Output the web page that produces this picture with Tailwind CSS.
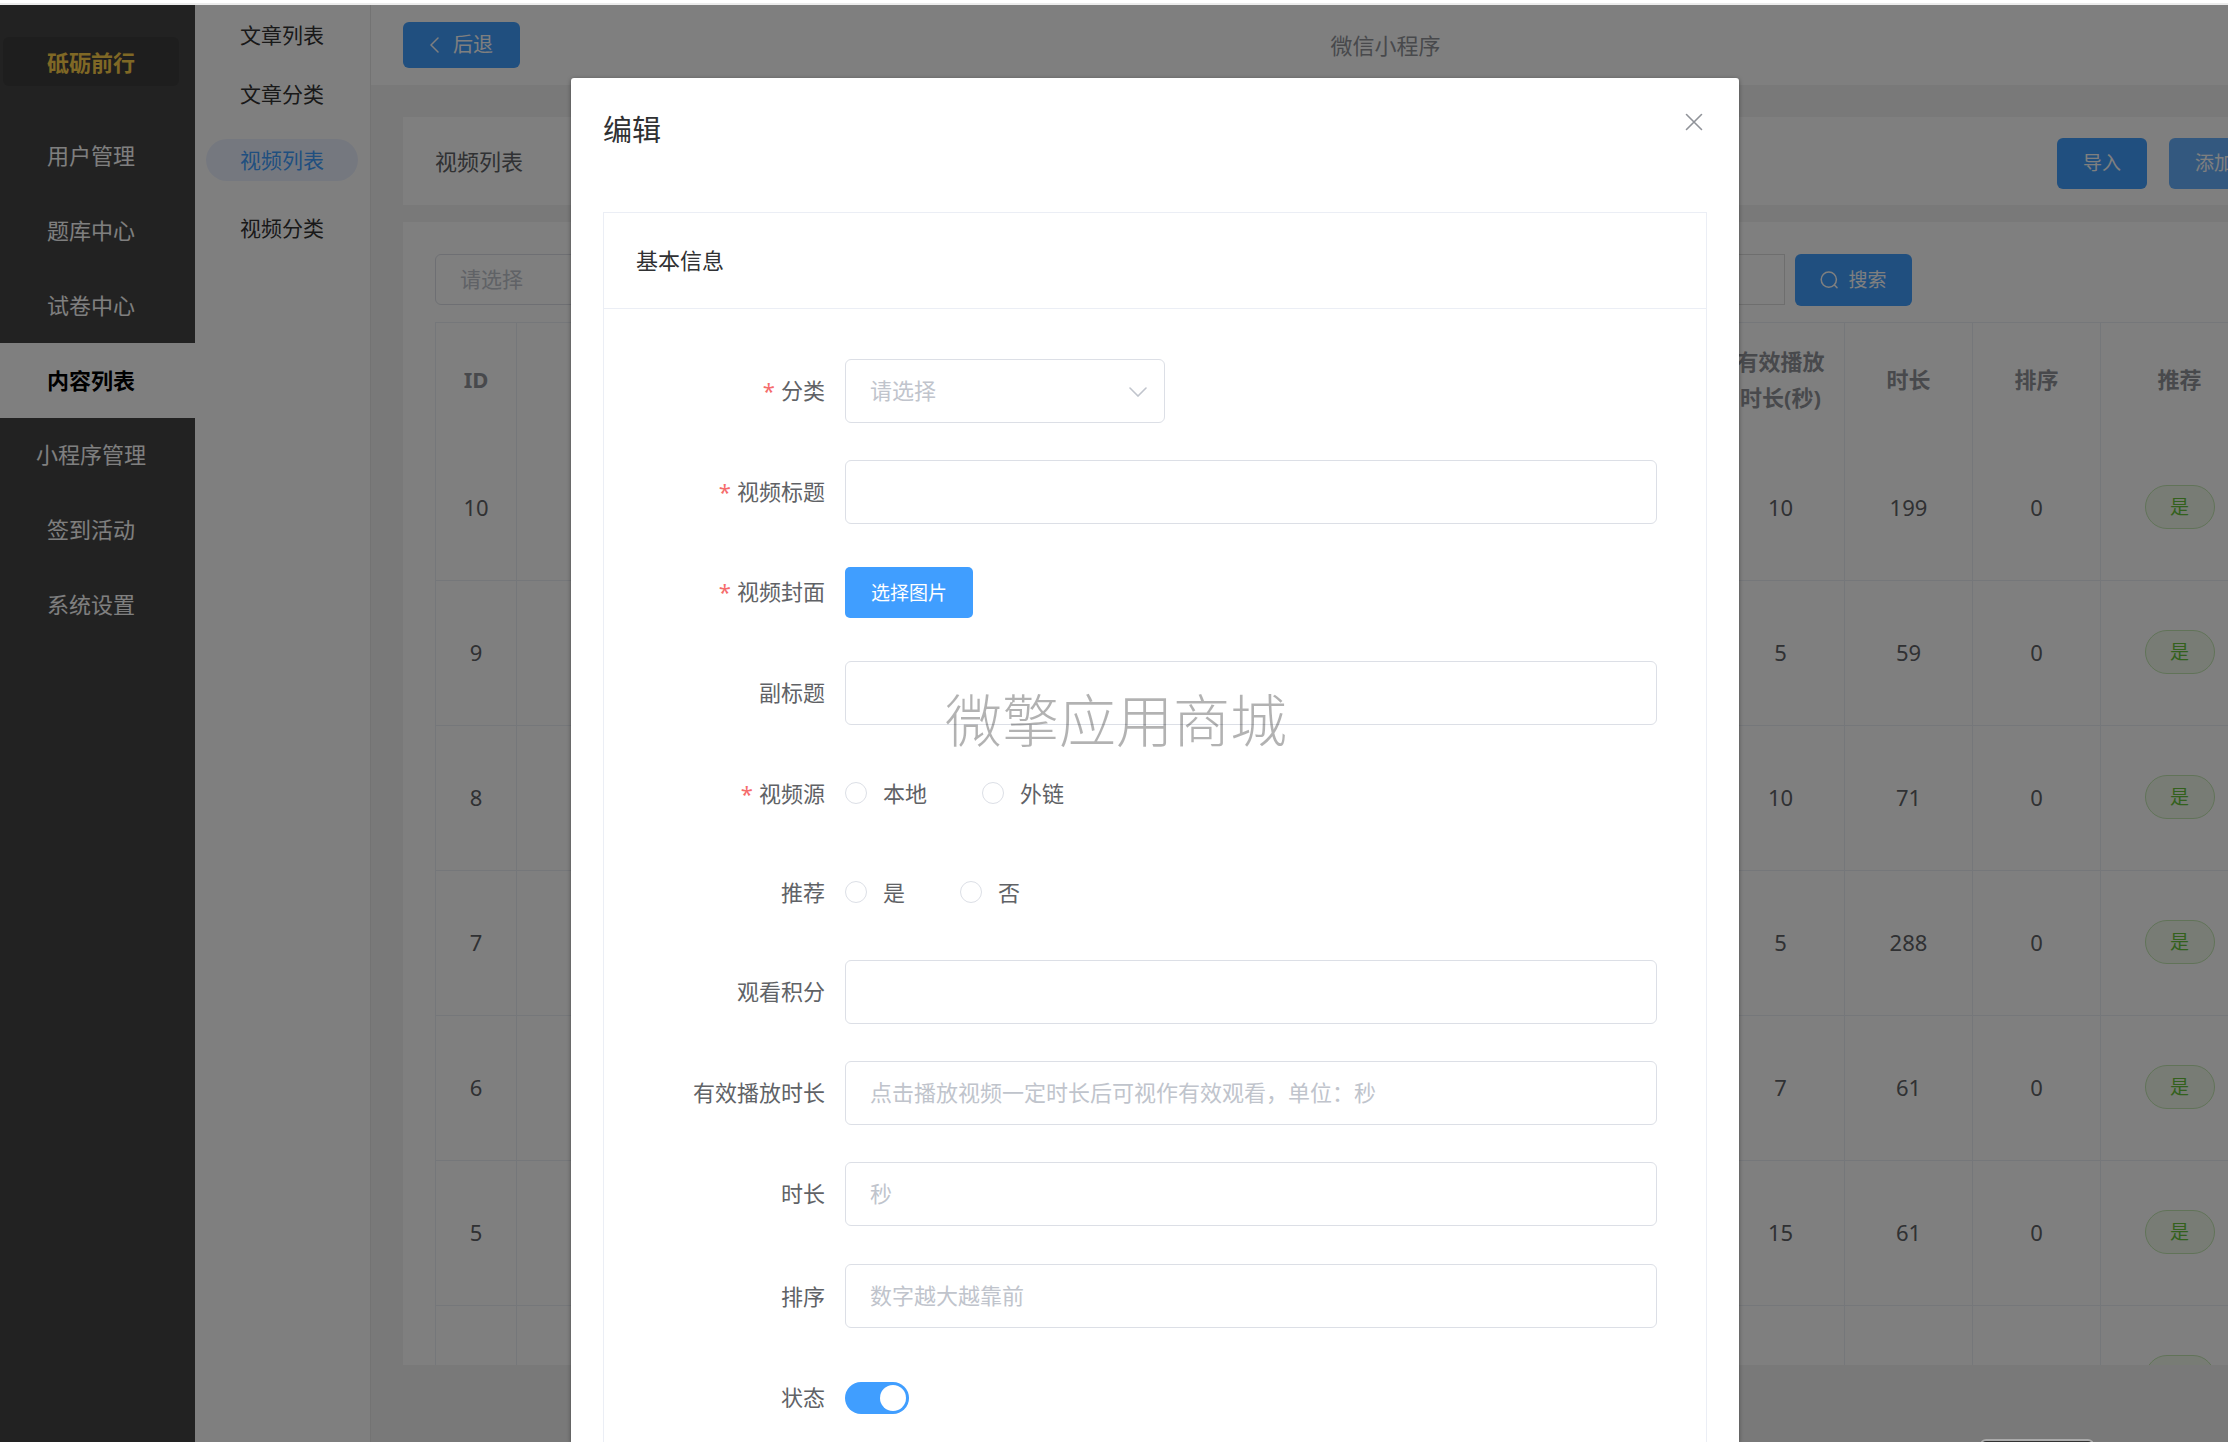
<!DOCTYPE html>
<html lang="zh-CN">
<head>
<meta charset="utf-8">
<title>视频列表</title>
<script src="https://cdn.jsdelivr.net/npm/@tailwindcss/browser@4"></script>
</head>
<body class="h-screen overflow-hidden bg-white font-['Noto_Sans','Noto_Sans_CJK_SC',sans-serif] text-[22px] leading-9 text-[#606266]">
<div class="flex h-full flex-col">
  <div class="h-[5px] shrink-0 border-b-2 border-[#ececec]"></div>
  <div class="relative flex min-h-0 flex-1 overflow-hidden">

    <!-- main menu -->
    <aside class="w-[195px] shrink-0 bg-[#444] text-white">
      <div class="ml-[3px] mt-8 flex h-[49px] w-44 items-center justify-center rounded-md bg-[#3c3c3c] font-bold text-[#ffd04b]">砥砺前行</div>
      <nav class="mt-[33px] flex h-[523px] flex-col text-center">
        <a href="#" class="flex flex-1 items-center justify-center pb-0.5 pr-[13px]">用户管理</a>
        <a href="#" class="flex flex-1 items-center justify-center pb-0.5 pr-[13px]">题库中心</a>
        <a href="#" class="flex flex-1 items-center justify-center pb-0.5 pr-[13px]">试卷中心</a>
        <a href="#" class="flex flex-1 items-center justify-center bg-white pb-0.5 pr-[13px] font-bold text-black">内容列表</a>
        <a href="#" class="flex flex-1 items-center justify-center pb-0.5 pr-[13px]">小程序管理</a>
        <a href="#" class="flex flex-1 items-center justify-center pb-0.5 pr-[13px]">签到活动</a>
        <a href="#" class="flex flex-1 items-center justify-center pb-0.5 pr-[13px]">系统设置</a>
      </nav>
    </aside>

    <!-- sub menu -->
    <nav class="flex w-[176px] shrink-0 flex-col gap-6 border-r border-[#e6e6e6] bg-white pl-[11px] pt-[9px] text-[21px] text-[#333]">
      <div class="flex flex-col gap-[17px]">
        <a href="#" class="flex h-[42px] w-[152px] items-center justify-center">文章列表</a>
        <a href="#" class="flex h-[42px] w-[152px] items-center justify-center">文章分类</a>
      </div>
      <div class="flex flex-col gap-[26px]">
        <a href="#" class="flex h-[42px] w-[152px] items-center justify-center rounded-full bg-[#ebf1ff] text-[#409eff]">视频列表</a>
        <a href="#" class="flex h-[42px] w-[152px] items-center justify-center">视频分类</a>
      </div>
    </nav>

    <!-- content -->
    <main class="flex min-w-[2029px] flex-1 flex-col bg-[#f2f2f2]">
      <header class="grid h-20 shrink-0 grid-cols-[1fr_auto_1fr] items-center bg-white px-8">
        <button type="button" class="flex h-[46px] w-[117px] items-center justify-center gap-[14px] rounded-md bg-[#409eff] text-[20px] text-white">
          <svg class="h-4 w-[9px]" viewBox="0 0 9 16" fill="none" stroke="currentColor" stroke-width="1.5" stroke-linecap="round"><path d="M8 1 1 8l7 7"/></svg>
          后退
        </button>
        <span class="text-[#909399]">微信小程序</span>
      </header>

      <section class="ml-8 mr-[31px] mt-8 flex h-[88px] shrink-0 items-center justify-between bg-white px-8">
        <h1>视频列表</h1>
        <div class="flex w-[280px] gap-[22px] pt-1 text-[19px] text-white">
          <button type="button" class="h-[51px] w-[90px] rounded-md bg-[#409eff]">导入</button>
          <button type="button" class="h-[51px] w-[90px] rounded-md bg-[#66b1ff]">添加</button>
        </div>
      </section>

      <section class="mb-[77px] ml-8 mr-[31px] mt-[17px] min-h-0 flex-1 overflow-hidden bg-white px-8 pt-8">
        <form class="flex h-[51px] gap-[10px]">
          <div class="flex w-[1350px] gap-5">
            <select aria-label="分类" class="w-60 appearance-none rounded-md border border-[#dcdfe6] px-6 pb-0.5 text-[21px] text-[#c0c4cc]"><option>请选择</option></select>
            <input type="text" aria-label="关键词" class="min-w-0 flex-1 border border-[#dcdcdc] px-6">
          </div>
          <button type="button" class="flex h-[52px] w-[117px] items-center justify-center gap-[10px] rounded-md bg-[#409eff] text-[19px] text-white">
            <svg class="h-[18px] w-[18px]" viewBox="0 0 18 18" fill="none" stroke="currentColor" stroke-width="1.5" stroke-linecap="round"><circle cx="8.8" cy="8.6" r="7.6"/><path d="m14.4 14 2.6 2.6"/></svg>
            搜索
          </button>
        </form>

        <table class="mt-[17px] w-full table-fixed border-separate border-spacing-0 border-l border-t border-[#ebeef5] text-center [&_td]:border-b [&_td]:border-r [&_td]:border-[#ebeef5] [&_td]:pb-0.5 [&_th]:border-r [&_th]:border-[#ebeef5] [&_th]:pb-0.5">
          <colgroup>
            <col class="w-[81px]"><col class="w-[1200px]"><col class="w-32"><col class="w-32"><col class="w-32"><col class="w-[158px]"><col>
          </colgroup>
          <thead class="text-[#909399]">
            <tr class="h-[113px]"><th>ID</th><th></th><th>有效播放<br>时长(秒)</th><th>时长</th><th>排序</th><th>推荐</th><th></th></tr>
          </thead>
          <tbody>
            <tr class="h-[145px]"><td>10</td><td></td><td>10</td><td>199</td><td>0</td><td><span class="mx-auto flex h-11 w-[70px] items-center justify-center rounded-full border border-[#c2e7b0] bg-[#f0f9eb] text-[19px] text-[#67c23a]">是</span></td><td></td></tr>
            <tr class="h-[145px]"><td>9</td><td></td><td>5</td><td>59</td><td>0</td><td><span class="mx-auto flex h-11 w-[70px] items-center justify-center rounded-full border border-[#c2e7b0] bg-[#f0f9eb] text-[19px] text-[#67c23a]">是</span></td><td></td></tr>
            <tr class="h-[145px]"><td>8</td><td></td><td>10</td><td>71</td><td>0</td><td><span class="mx-auto flex h-11 w-[70px] items-center justify-center rounded-full border border-[#c2e7b0] bg-[#f0f9eb] text-[19px] text-[#67c23a]">是</span></td><td></td></tr>
            <tr class="h-[145px]"><td>7</td><td></td><td>5</td><td>288</td><td>0</td><td><span class="mx-auto flex h-11 w-[70px] items-center justify-center rounded-full border border-[#c2e7b0] bg-[#f0f9eb] text-[19px] text-[#67c23a]">是</span></td><td></td></tr>
            <tr class="h-[145px]"><td>6</td><td></td><td>7</td><td>61</td><td>0</td><td><span class="mx-auto flex h-11 w-[70px] items-center justify-center rounded-full border border-[#c2e7b0] bg-[#f0f9eb] text-[19px] text-[#67c23a]">是</span></td><td></td></tr>
            <tr class="h-[145px]"><td>5</td><td></td><td>15</td><td>61</td><td>0</td><td><span class="mx-auto flex h-11 w-[70px] items-center justify-center rounded-full border border-[#c2e7b0] bg-[#f0f9eb] text-[19px] text-[#67c23a]">是</span></td><td></td></tr>
            <tr class="h-[145px]"><td></td><td></td><td></td><td></td><td></td><td><span class="mx-auto flex h-11 w-[70px] rounded-full border border-[#c2e7b0] bg-[#f0f9eb]"></span></td><td></td></tr>
          </tbody>
        </table>
      </section>
    </main>

    <!-- edit dialog -->
    <div class="absolute inset-0 flex justify-center overflow-hidden bg-black/50 pl-[82px] pt-[73px]">
      <div role="dialog" aria-labelledby="dialog-title" class="flex w-[1168px] flex-col rounded-t-[3px] bg-white px-8 shadow-[0_1px_4px_rgba(0,0,0,0.4)]">
        <div class="flex h-[134px] shrink-0 items-start justify-between pt-[34px]">
          <h2 id="dialog-title" class="text-[29px] text-[#303133]">编辑</h2>
          <button type="button" aria-label="关闭" class="mr-[3px] p-px text-[#909399]">
            <svg class="h-[18px] w-[18px]" viewBox="0 0 18 18" fill="none" stroke="currentColor" stroke-width="1.6" stroke-linecap="round"><path d="m1.500 1.500 15 15m0-15-15 15"/></svg>
          </button>
        </div>
        <div class="min-h-0 flex-1 border-x border-t border-[#ebeef5]">
          <h3 class="flex h-24 items-center border-b border-[#ebeef5] px-8 pb-0.5 text-[#303133]">基本信息</h3>
          <form class="flex flex-col gap-[37px] px-[49px] pt-[50px]">
            <div class="flex h-16 items-center gap-5">
              <label for="category" class="w-[172px] pb-[3px] text-right"><span class="mr-1.5 text-[#f56c6c]">*</span>分类</label>
              <div class="relative h-full w-80">
                <select id="category" class="h-full w-full appearance-none rounded-md border border-[#dcdfe6] px-6 pb-[3px] text-[#c0c4cc]"><option>请选择</option></select>
                <svg class="pointer-events-none absolute right-[18px] top-7 h-[10px] w-[18px] text-[#c0c4cc]" viewBox="0 0 18 10" fill="none" stroke="currentColor" stroke-width="1.6" stroke-linecap="round"><path d="m1 1 8 8 8-8"/></svg>
              </div>
            </div>
            <div class="flex h-16 items-center gap-5">
              <label for="title" class="w-[172px] pb-[3px] text-right"><span class="mr-1.5 text-[#f56c6c]">*</span>视频标题</label>
              <input id="title" type="text" class="h-full min-w-0 flex-1 rounded-md border border-[#dcdfe6] px-6">
            </div>
            <div class="flex h-[63px] items-center gap-5">
              <label for="cover" class="w-[172px] pb-[3px] text-right"><span class="mr-1.5 text-[#f56c6c]">*</span>视频封面</label>
              <button id="cover" type="button" class="h-[51px] w-32 rounded-[5px] bg-[#409eff] text-[19px] text-white">选择图片</button>
            </div>
            <div class="flex h-16 items-center gap-5">
              <label for="subtitle" class="w-[172px] pb-[3px] text-right">副标题</label>
              <input id="subtitle" type="text" class="h-full min-w-0 flex-1 rounded-md border border-[#dcdfe6] px-6">
            </div>
            <div role="radiogroup" aria-labelledby="source-label" class="flex h-[62px] items-center gap-5">
              <span id="source-label" class="w-[172px] text-right"><span class="mr-1.5 text-[#f56c6c]">*</span>视频源</span>
              <div class="flex gap-[55px]">
                <label class="flex items-center gap-4"><input type="radio" name="source" class="h-[22px] w-[22px] appearance-none rounded-full border border-[#dcdfe6] bg-white">本地</label>
                <label class="flex items-center gap-4"><input type="radio" name="source" class="h-[22px] w-[22px] appearance-none rounded-full border border-[#dcdfe6] bg-white">外链</label>
              </div>
            </div>
            <div role="radiogroup" aria-labelledby="recommend-label" class="flex h-[62px] items-center gap-5">
              <span id="recommend-label" class="w-[172px] text-right">推荐</span>
              <div class="flex gap-[55px]">
                <label class="flex items-center gap-4"><input type="radio" name="recommend" class="h-[22px] w-[22px] appearance-none rounded-full border border-[#dcdfe6] bg-white">是</label>
                <label class="flex items-center gap-4"><input type="radio" name="recommend" class="h-[22px] w-[22px] appearance-none rounded-full border border-[#dcdfe6] bg-white">否</label>
              </div>
            </div>
            <div class="flex h-16 items-center gap-5">
              <label for="points" class="w-[172px] pb-[3px] text-right">观看积分</label>
              <input id="points" type="text" class="h-full min-w-0 flex-1 rounded-md border border-[#dcdfe6] px-6">
            </div>
            <div class="flex h-16 items-center gap-5">
              <label for="valid" class="w-[172px] pb-[3px] text-right">有效播放时长</label>
              <input id="valid" type="text" placeholder="点击播放视频一定时长后可视作有效观看，单位：秒" class="h-full min-w-0 flex-1 rounded-md border border-[#dcdfe6] px-6 pb-[3px] placeholder:text-[#c0c4cc]">
            </div>
            <div class="flex h-16 items-center gap-5">
              <label for="duration" class="w-[172px] pb-[3px] text-right">时长</label>
              <input id="duration" type="text" placeholder="秒" class="h-full min-w-0 flex-1 rounded-md border border-[#dcdfe6] px-6 pb-[3px] placeholder:text-[#c0c4cc]">
            </div>
            <div class="flex h-[65px] items-center gap-5">
              <label for="sort" class="w-[172px] text-right">排序</label>
              <input id="sort" type="text" placeholder="数字越大越靠前" class="h-16 min-w-0 flex-1 rounded-md border border-[#dcdfe6] px-6 pb-0.5 placeholder:text-[#c0c4cc]">
            </div>
            <div class="flex h-[65px] items-center gap-5">
              <label for="status" class="w-[172px] pb-0.5 text-right">状态</label>
              <input id="status" type="checkbox" role="switch" checked class="flex h-8 w-16 appearance-none items-center rounded-full bg-[#409eff] px-[3px] before:h-[26px] before:w-[26px] before:rounded-full before:bg-white checked:justify-end">
            </div>
          </form>
        </div>
      </div>
    </div>

    <!-- watermark -->
    <div class="pointer-events-none absolute left-[945px] top-[680px] text-[57px] font-light leading-[70px] text-black/30">微擎应用商城</div>
    <!-- floating bar peeking in at the bottom edge -->
    <div class="absolute -bottom-8 left-[1980px] h-[35px] w-[114px] rounded-md border-2 border-[#aaa] bg-[#333]"></div>
  </div>
</div>
</body>
</html>
